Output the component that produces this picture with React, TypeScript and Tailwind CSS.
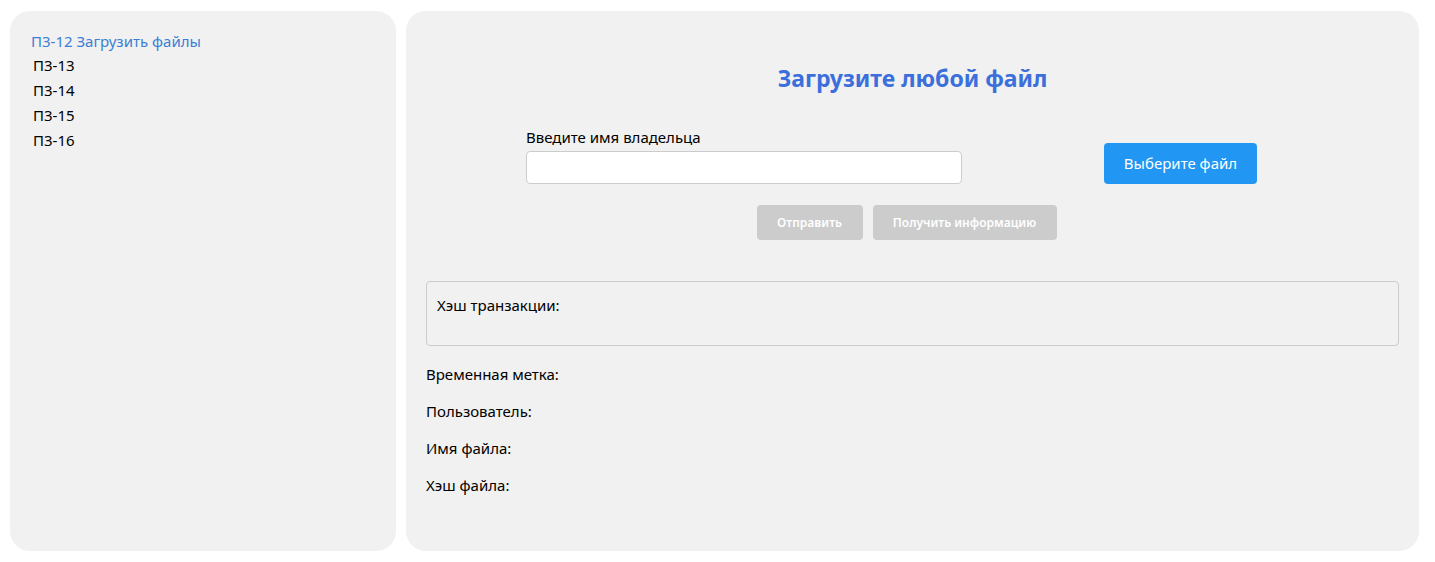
const links = ['П3-13', 'П3-14', 'П3-15', 'П3-16'];
const info = ['Временная метка:', 'Пользователь:', 'Имя файла:', 'Хэш файла:'];

const App = () => {
  return (
    <div
      className="flex gap-[10px] pl-[10px] pt-[11px] bg-white w-[1435px] h-[562px] text-black text-[15px]"
      style={{fontFamily: '"Noto Sans", "Open Sans", sans-serif'}}
    >
      <aside className="w-[386px] h-[540px] bg-[#f1f1f1] rounded-[20px] pt-[19px] pl-[21px] shrink-0">
        <div className="text-[#3a7fd5] leading-[23px]">П3-12 Загрузить файлы</div>
        <ul className="pl-[2px]">
          {links.map((item) => (
            <li key={item} className="leading-[25px]">
              {item}
            </li>
          ))}
        </ul>
      </aside>

      <main className="w-[1013px] h-[540px] bg-[#f1f1f1] rounded-[20px] px-[20px] shrink-0">
        <h1 className="text-center text-[23px] font-bold text-[#3b6fdc] pt-[52px] leading-[30px]">
          Загрузите любой файл
        </h1>

        <div className="flex items-end pl-[100px] mt-[34px]">
          <div className="flex flex-col w-[436px]">
            <label className="leading-[20px] mb-[4px]">Введите имя владельца</label>
            <input
              type="text"
              className="h-[33px] bg-white border border-[#ccc] rounded-[4px] px-2 outline-none"
            />
          </div>
          <button className="ml-[142px] w-[153px] h-[41px] bg-[#2196f3] text-white rounded-[4px] text-[15px]">
            Выберите файл
          </button>
        </div>

        <div className="flex justify-center mt-[21px] pr-[2px]">
          <button className="w-[106px] h-[35px] mr-[10px] bg-[#ccc] text-white rounded-[4px] text-[12px] font-semibold">
            Отправить
          </button>
          <button className="w-[184px] h-[35px] mr-[10px] bg-[#ccc] text-white rounded-[4px] text-[12px] font-semibold">
            Получить информацию
          </button>
        </div>

        <div className="mt-[41px] h-[65px] border border-[#ccc] rounded-[4px] pt-[12px] pl-[10px] leading-[22px]">
          Хэш транзакции:
        </div>

        <div className="mt-[17px] flex flex-col gap-[15px]">
          {info.map((item) => (
            <p key={item} className="leading-[22px]">
              {item}
            </p>
          ))}
        </div>
      </main>
    </div>
  );
};

export default App;
